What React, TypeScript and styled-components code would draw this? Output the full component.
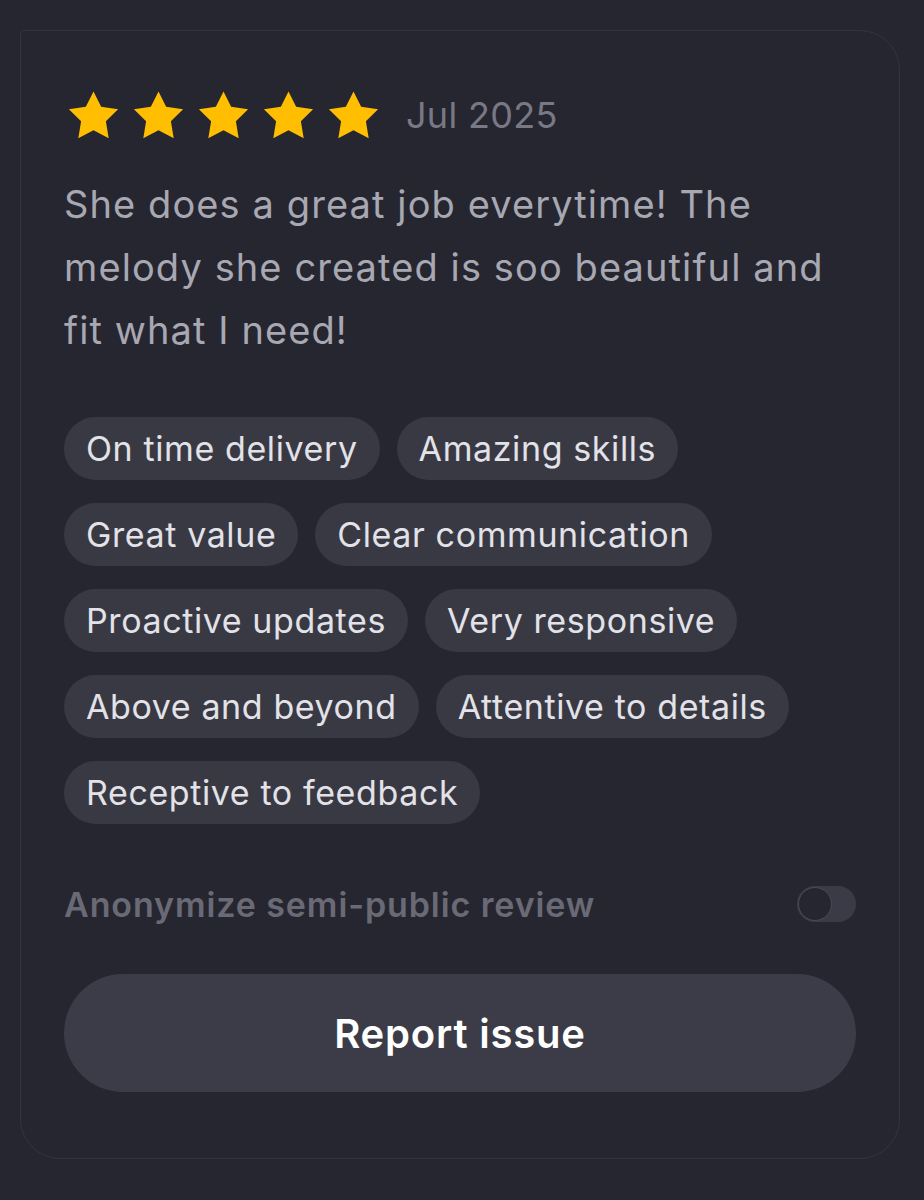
import React from "react";
import styled, { createGlobalStyle } from "styled-components";

const Global = createGlobalStyle`
  html, body { margin: 0; padding: 0; background: #262631; }
  body { font-family: Inter, "Noto Sans", sans-serif; -webkit-font-smoothing: antialiased; }
`;

const Page = styled.div`
  width: 924px;
  min-height: 1200px;
  box-sizing: border-box;
  padding: 30px 24px 0 20px;
  background: #262631;
`;

const Card = styled.section`
  box-sizing: border-box;
  width: 880px;
  border: 1.5px solid #34343f;
  border-radius: 4px 40px 40px 40px;
  padding: 56px 43px 66px 43px;
  display: flex;
  flex-direction: column;
`;

const StarRow = styled.div`
  display: flex;
  align-items: center;
  height: 56px;
`;

const Stars = styled.div`
  display: flex;
  gap: 12px;
  margin-left: 3px;
`;

const DateText = styled.span`
  margin-left: 26px;
  font-size: 36px;
  color: #797985;
  letter-spacing: 0.3px;
`;

const Body = styled.p`
  margin: 30px 0 0 0;
  font-size: 38px;
  line-height: 63px;
  color: #a8a8b2;
  letter-spacing: 1.1px;
`;

const Tags = styled.div`
  display: flex;
  flex-wrap: wrap;
  column-gap: 17px;
  row-gap: 23px;
  margin-top: 55px;
  max-width: 760px;
`;

const Tag = styled.span`
  display: inline-flex;
  align-items: center;
  height: 63px;
  padding: 0 22px;
  border-radius: 32px;
  background: #393944;
  color: #e2e2e8;
  font-size: 34px;
  letter-spacing: 0.6px;
  box-sizing: border-box;
`;

const ToggleRow = styled.div`
  display: flex;
  align-items: center;
  justify-content: space-between;
  height: 40px;
  margin-top: 60px;
`;

const ToggleLabel = styled.span`
  font-size: 34px;
  font-weight: 600;
  color: #6a6a76;
  letter-spacing: 0.9px;
`;

const Toggle = styled.span`
  position: relative;
  width: 59px;
  height: 36px;
  border-radius: 18px;
  background: #3b3b47;
  box-sizing: border-box;
`;

const Knob = styled.span`
  position: absolute;
  left: 1px;
  top: 1px;
  width: 34px;
  height: 34px;
  border-radius: 50%;
  background: #262631;
  border: 1.5px solid #4a4a56;
  box-sizing: border-box;
`;

const Button = styled.button`
  margin-top: 50px;
  height: 118px;
  border: none;
  border-radius: 59px;
  background: #3c3c48;
  color: #ffffff;
  font-family: Inter, "Noto Sans", sans-serif;
  font-size: 40px;
  font-weight: 600;
  letter-spacing: 0.8px;
  cursor: pointer;
`;

const Star = () => (
  <svg width="53" height="51" viewBox="0 0 24 23" aria-hidden="true">
    <path
      d="M12 0.6 L15.47 7.53 L23.13 8.68 L17.61 14.12 L18.88 21.77 L12 18.2 L5.12 21.77 L6.39 14.12 L0.87 8.68 L8.53 7.53 Z"
      fill="#FFBE00"
    />
  </svg>
);

const tags = [
  "On time delivery",
  "Amazing skills",
  "Great value",
  "Clear communication",
  "Proactive updates",
  "Very responsive",
  "Above and beyond",
  "Attentive to details",
  "Receptive to feedback",
];

export default function App() {
  return (
    <Page>
      <Global />
      <Card>
        <StarRow>
          <Stars>
            {[0, 1, 2, 3, 4].map((i) => (
              <Star key={i} />
            ))}
          </Stars>
          <DateText>Jul 2025</DateText>
        </StarRow>
        <Body>
          She does a great job everytime! The melody she created is soo beautiful and fit what I need!
        </Body>
        <Tags>
          {tags.map((t) => (
            <Tag key={t}>{t}</Tag>
          ))}
        </Tags>
        <ToggleRow>
          <ToggleLabel>Anonymize semi-public review</ToggleLabel>
          <Toggle>
            <Knob />
          </Toggle>
        </ToggleRow>
        <Button>Report issue</Button>
      </Card>
    </Page>
  );
}
